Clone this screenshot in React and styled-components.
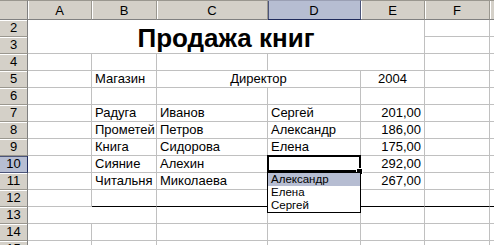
import React from "react";
import styled, { createGlobalStyle } from "styled-components";

const Global = createGlobalStyle`
  html, body { margin: 0; padding: 0; background: #fff; overflow: hidden; }
  body { font-family: "Liberation Sans", Arial, sans-serif; }
`;

const GRID = "#c0c0c0";

const Sheet = styled.div`
  display: grid;
  grid-template-columns: 28px 64px 65px 111px 93px 64px 65px 1fr;
  grid-template-rows: 20px repeat(14, 17px);
  width: 494px;
  height: 245px;
  overflow: hidden;
  background: #fff;
  font-family: "Liberation Sans", Arial, sans-serif;
  font-size: 13px;
  color: #000;
`;

const Corner = styled.div`
  grid-column: 1;
  grid-row: 1;
  box-sizing: border-box;
  background: #d4d0c8;
  border-right: 1px solid #808080;
  border-bottom: 1px solid #808080;
  border-top: 1px solid #9a978f;
`;

const ColHeader = styled.div`
  grid-row: 1;
  grid-column: ${(p) => p.$col};
  box-sizing: border-box;
  display: flex;
  align-items: center;
  justify-content: center;
  padding-top: 1px;
  background: ${(p) => (p.$active ? "#b6bdd2" : "#d4d0c8")};
  border-top: 1px solid ${(p) => (p.$active ? "#9a9fb4" : "#9a978f")};
  border-right: 1px solid ${(p) => (p.$active ? "#4b5478" : "#9a978f")};
  border-bottom: 1px solid ${(p) => (p.$active ? "#1f2a5c" : "#808080")};
  box-shadow: inset 1px 0 0 ${(p) => (p.$active ? "#4b5478" : "#ffffff")};
  font-size: 13px;
  line-height: 16px;
  color: #000;
`;

const RowHeader = styled.div`
  grid-column: 1;
  grid-row: ${(p) => p.$row};
  box-sizing: border-box;
  display: flex;
  align-items: center;
  justify-content: center;
  background: ${(p) => (p.$active ? "#b6bdd2" : "#d4d0c8")};
  border-right: 1px solid ${(p) => (p.$active ? "#1f2a5c" : "#808080")};
  border-bottom: 1px solid ${(p) => (p.$active ? "#4b5478" : "#9a978f")};
  box-shadow: inset 0 1px 0 ${(p) => (p.$active ? "#4b5478" : "#ffffff")};
  font-size: 13px;
  line-height: 16px;
  color: #000;
`;

const Cell = styled.div`
  position: relative;
  grid-column: ${(p) => p.$col} / span ${(p) => p.$span || 1};
  grid-row: ${(p) => p.$row} / span ${(p) => p.$rows || 1};
  box-sizing: border-box;
  display: flex;
  align-items: flex-end;
  justify-content: ${(p) =>
    p.$align === "right" ? "flex-end" : p.$align === "center" ? "center" : "flex-start"};
  padding: 0 3px;
  border-right: 1px solid ${(p) => (p.$noRight ? "transparent" : GRID)};
  border-bottom: 1px solid ${(p) => (p.$thick ? "#000" : GRID)};
  white-space: nowrap;
  line-height: 16px;
`;

const Title = styled.div`
  grid-column: 2 / span 5;
  grid-row: 2 / span 2;
  box-sizing: border-box;
  display: flex;
  align-items: center;
  justify-content: center;
  padding-top: 2px;
  border-right: 1px solid ${GRID};
  border-bottom: 1px solid ${GRID};
  font-size: 26px;
  font-weight: bold;
  line-height: 28px;
  white-space: nowrap;
`;

const Selection = styled.div`
  position: absolute;
  left: -1px;
  top: -1px;
  right: -1px;
  bottom: 0;
  border: 2px solid #000;
  pointer-events: none;
  z-index: 2;
`;

const FillHandle = styled.div`
  position: absolute;
  right: -3px;
  bottom: -3px;
  width: 5px;
  height: 5px;
  background: #000;
  border: 1px solid #fff;
  box-sizing: content-box;
  z-index: 3;
`;

const DropList = styled.ul`
  position: absolute;
  left: -1px;
  top: 100%;
  width: 94px;
  margin: 0;
  padding: 0;
  list-style: none;
  box-sizing: border-box;
  border: 1px solid #000;
  background: #fff;
  z-index: 4;
  font-size: 11.5px;
  line-height: 13px;
`;

const DropItem = styled.li`
  height: 13px;
  padding: 0 3px;
  background: ${(p) => (p.$active ? "#b6bdd2" : "transparent")};
  white-space: nowrap;
`;

const cols = ["A", "B", "C", "D", "E", "F", "G"];
const rows = [2, 3, 4, 5, 6, 7, 8, 9, 10, 11, 12, 13, 14, 15];

const data = {
  7: ["Радуга", "Иванов", "Сергей", "201,00"],
  8: ["Прометей", "Петров", "Александр", "186,00"],
  9: ["Книга", "Сидорова", "Елена", "175,00"],
  10: ["Сияние", "Алехин", "", "292,00"],
  11: ["Читальня", "Миколаева", "", "267,00"],
};

function buildCells() {
  const out = [];
  const g = (c) => c + 1; // column A=1 -> grid col 2
  [2, 3].forEach((r) => {
    out.push(<Cell key={`F${r}`} $col={g(6)} $row={r} />);
    out.push(<Cell key={`G${r}`} $col={g(7)} $row={r} />);
  });
  out.push(<Cell key="A4" $col={g(1)} $row={4} />);
  out.push(<Cell key="B4" $col={g(2)} $row={4} />);
  out.push(<Cell key="C4" $col={g(3)} $row={4} />);
  out.push(<Cell key="D4" $col={g(4)} $span={2} $row={4} />);
  out.push(<Cell key="F4" $col={g(6)} $row={4} />);
  out.push(<Cell key="G4" $col={g(7)} $row={4} />);
  out.push(<Cell key="A5" $col={g(1)} $row={5} />);
  out.push(<Cell key="B5" $col={g(2)} $row={5}>Магазин</Cell>);
  out.push(
    <Cell key="C5" $col={g(3)} $span={2} $row={5} $align="center">
      Директор
    </Cell>
  );
  out.push(
    <Cell key="E5" $col={g(5)} $row={5} $align="center">
      2004
    </Cell>
  );
  out.push(<Cell key="F5" $col={g(6)} $row={5} />);
  out.push(<Cell key="G5" $col={g(7)} $row={5} />);
  for (let r = 6; r <= 12; r++) {
    const d = data[r] || ["", "", "", ""];
    const thick = r === 12;
    out.push(<Cell key={`A${r}`} $col={g(1)} $row={r} />);
    out.push(<Cell key={`B${r}`} $col={g(2)} $row={r} $thick={thick}>{d[0]}</Cell>);
    out.push(<Cell key={`C${r}`} $col={g(3)} $row={r} $thick={thick}>{d[1]}</Cell>);
    if (r === 10) {
      out.push(
        <Cell key="D10" $col={g(4)} $row={r}>
          <Selection />
          <FillHandle />
          <DropList>
            <DropItem $active>Александр</DropItem>
            <DropItem>Елена</DropItem>
            <DropItem>Сергей</DropItem>
          </DropList>
        </Cell>
      );
    } else {
      out.push(<Cell key={`D${r}`} $col={g(4)} $row={r} $thick={thick}>{d[2]}</Cell>);
    }
    out.push(
      <Cell key={`E${r}`} $col={g(5)} $row={r} $align="right" $thick={thick}>
        {d[3]}
      </Cell>
    );
    out.push(<Cell key={`F${r}`} $col={g(6)} $row={r} $thick={thick} />);
    out.push(<Cell key={`G${r}`} $col={g(7)} $row={r} $thick={thick} />);
  }
  out.push(<Cell key="A13" $col={g(1)} $span={2} $row={13} />);
  ["C", "D", "E", "F", "G"].forEach((c, i) =>
    out.push(<Cell key={`${c}13`} $col={g(3 + i)} $row={13} />)
  );
  [14, 15].forEach((r) =>
    cols.forEach((c, i) => out.push(<Cell key={`${c}${r}`} $col={g(i + 1)} $row={r} />))
  );
  return out;
}

export default function App() {
  return (
    <>
      <Global />
      <Sheet>
        <Corner />
        {cols.map((c, i) => (
          <ColHeader key={c} $col={i + 2} $active={c === "D"}>
            {c === "G" ? "" : c}
          </ColHeader>
        ))}
        {rows.map((r) => (
          <RowHeader key={r} $row={r} $active={r === 10}>
            {r}
          </RowHeader>
        ))}
        <Title>Продажа книг</Title>
        {buildCells()}
      </Sheet>
    </>
  );
}
